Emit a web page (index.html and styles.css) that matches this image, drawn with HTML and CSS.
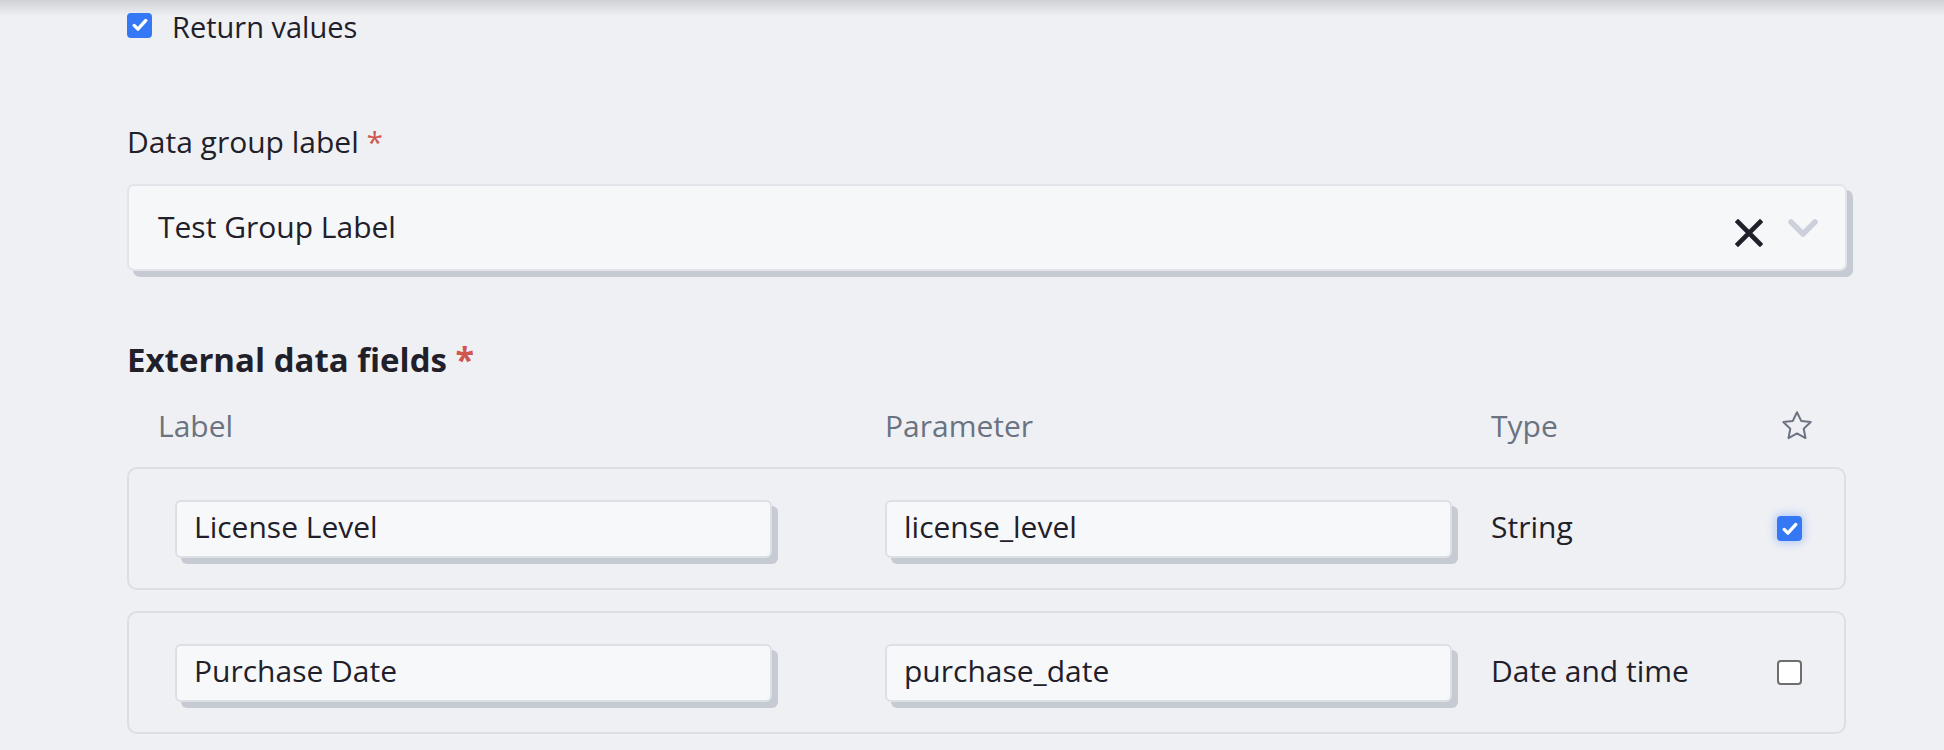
FILE: index.html
```html
<!DOCTYPE html>
<html lang="en">
<head>
<meta charset="utf-8">
<title>External data</title>
<link rel="stylesheet" href="styles.css">
</head>
<body>
<main class="form">
  <div class="return-row">
    <span class="check checked">
      <svg viewBox="0 0 24 24" width="20" height="20"><path d="M5 12.5l4.5 4.5L19 6.5" fill="none" stroke="#fff" stroke-width="4" stroke-linecap="round" stroke-linejoin="round"/></svg>
    </span>
    <span class="return-text">Return values</span>
  </div>

  <label class="field-label">Data group label <span class="req">*</span></label>
  <div class="select">
    <span class="select-value">Test Group Label</span>
    <span class="select-icons">
      <svg class="clear-icon" viewBox="0 0 28 28" width="28" height="28"><path d="M3 3L25 25M25 3L3 25" stroke="#1f2029" stroke-width="4.6" stroke-linecap="square"/></svg>
      <svg class="chev-icon" viewBox="0 0 32 20" width="32" height="20"><path d="M4 4l12 12L28 4" fill="none" stroke="#cbd0da" stroke-width="5.5" stroke-linecap="round" stroke-linejoin="round"/></svg>
    </span>
  </div>

  <h2 class="section-title">External data fields <span class="req">*</span></h2>

  <div class="col-head">
    <span>Label</span>
    <span>Parameter</span>
    <span>Type</span>
    <svg class="star" viewBox="0 0 34 34" width="34" height="34"><path d="M17 3.2l4.2 8.7 9.5 1.2-7 6.6 1.8 9.4L17 24.4l-8.5 4.7 1.8-9.4-7-6.6 9.5-1.2z" fill="none" stroke="#6b7280" stroke-width="2" stroke-linejoin="round"/></svg>
  </div>

  <div class="field-row">
    <div class="cell"><div class="input">License Level</div></div>
    <div class="cell"><div class="input param">license_level</div></div>
    <div class="type">String</div>
    <span class="check checked focused">
      <svg viewBox="0 0 24 24" width="20" height="20"><path d="M5 12.5l4.5 4.5L19 6.5" fill="none" stroke="#fff" stroke-width="4" stroke-linecap="round" stroke-linejoin="round"/></svg>
    </span>
  </div>

  <div class="field-row">
    <div class="cell"><div class="input">Purchase Date</div></div>
    <div class="cell"><div class="input param">purchase_date</div></div>
    <div class="type">Date and time</div>
    <span class="check"></span>
  </div>
</main>
</body>
</html>
```

FILE: styles.css
```css
* { box-sizing: border-box; }

html, body {
  margin: 0;
  padding: 0;
}

body {
  background: linear-gradient(to bottom, rgba(0, 0, 0, 0.13), rgba(0, 0, 0, 0) 16px), #eff0f4;
  font-family: "Open Sans", "Lato", sans-serif;
  font-size: 30px;
  line-height: 36px;
  color: #1f2029;
  min-height: 750px;
}

.form {
  width: 1853px;
  padding-left: 127px;
}

.return-row {
  height: 50px;
  display: flex;
  align-items: center;
  gap: 20px;
}

.return-text {
  line-height: 36px;
  margin-top: 3px;
  font-size: 29px;
}

.check {
  width: 25px;
  height: 25px;
  flex: none;
  border-radius: 4px;
  border: 2px solid #6e6e6e;
  background: #fff;
  display: flex;
  align-items: center;
  justify-content: center;
}

.check.checked {
  background: #3478f6;
  border-color: #3478f6;
}

.check.focused {
  box-shadow: 0 0 8px 2px rgba(59, 130, 246, 0.35);
}

.field-label {
  display: block;
  margin-top: 74px;
  line-height: 36px;
}

.req {
  color: #d0574f;
}

.select {
  margin-top: 24px;
  width: 1720px;
  height: 87px;
  border: 2px solid #e2e4e9;
  border-radius: 7px;
  background: #f6f7f9;
  box-shadow: 6px 6px 0 #c6cad2;
  display: flex;
  align-items: center;
  justify-content: space-between;
  padding: 0 26px 0 29px;
}

.select-value {
  margin-top: -2px;
}

.select-icons {
  display: flex;
  align-items: center;
  gap: 24px;
}

.clear-icon {
  margin-top: 10px;
}

.section-title {
  margin: 68px 0 0;
  font-size: 33px;
  line-height: 40px;
  font-weight: 700;
  color: #1f2029;
}

.section-title .req {
  font-size: 34px;
}

.col-head {
  margin-top: 28px;
  height: 36px;
  padding-left: 31px;
  display: grid;
  grid-template-columns: 727px 606px 289px 34px;
  align-items: center;
  color: #6b7280;
}

.col-head .star {
  display: block;
}

.field-row {
  margin-top: 23px;
  width: 1719px;
  height: 123px;
  border: 2px solid #dcdee5;
  border-radius: 10px;
  padding: 0 42px 0 46px;
  display: grid;
  grid-template-columns: 710px 606px 286px 25px;
  align-items: center;
}

.field-row + .field-row {
  margin-top: 21px;
}

.input {
  width: 597px;
  height: 58px;
  border: 2px solid #dcdfe5;
  border-radius: 6px;
  background: #f7f8fa;
  box-shadow: 6px 6px 0 #c6cad2;
  padding: 0 17px 4px;
  display: flex;
  align-items: center;
}

.input.param {
  width: 567px;
}

.type {
  line-height: 36px;
  margin-top: -4px;
}
```
